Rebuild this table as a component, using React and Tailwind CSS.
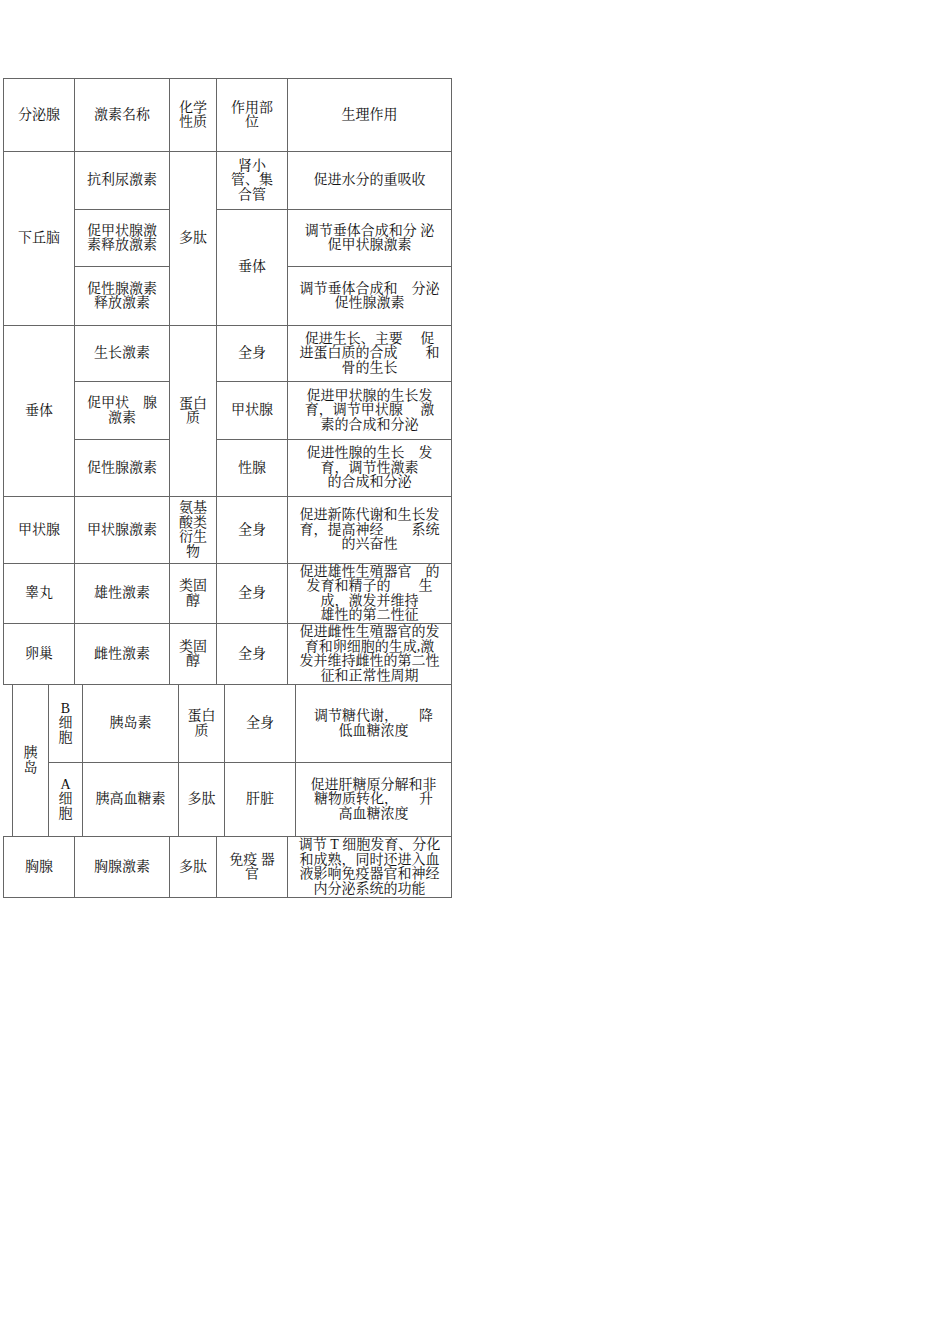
const FONT = {
  fontFamily: '"Liberation Serif", "Noto Serif CJK SC", "Noto Sans CJK SC", serif',
};

// 单元格：文字居中，多行用数组传入
function Cell({ lines, rowSpan, colSpan, className = '' }) {
  return (
    <td
      rowSpan={rowSpan}
      colSpan={colSpan}
      className={`border border-[#666] p-0 text-center align-middle whitespace-pre text-[14px] leading-[14.5px] text-[#111] ${className}`}
    >
      {lines.map((l, i) => (
        <div key={i}>{l}</div>
      ))}
    </td>
  );
}

const MAIN_COLS = [71, 95, 47, 71, 164];
const PANC_COLS = [36, 34, 96, 46, 71, 156];

function Cols({ widths }) {
  return (
    <colgroup>
      {widths.map((w, i) => (
        <col key={i} style={{ width: w }} />
      ))}
    </colgroup>
  );
}

export default function App() {
  return (
    <div className="w-[950px] h-[1344px] bg-white pt-[78px]" style={FONT}>
      {/* 主表 */}
      <table className="ml-[3px] w-[448px] table-fixed border-collapse">
        <Cols widths={MAIN_COLS} />
        <tbody>
          <tr className="h-[73px]">
            <Cell lines={['分泌腺']} />
            <Cell lines={['激素名称']} />
            <Cell lines={['化学', '性质']} />
            <Cell lines={['作用部', '位']} />
            <Cell lines={['生理作用']} />
          </tr>
          <tr className="h-[58px]">
            <Cell rowSpan={3} lines={['下丘脑']} />
            <Cell lines={['抗利尿激素']} />
            <Cell rowSpan={3} lines={['多肽']} />
            <Cell lines={['肾小', '管、集', '合管']} />
            <Cell lines={['促进水分的重吸收']} />
          </tr>
          <tr className="h-[57px]">
            <Cell lines={['促甲状腺激', '素释放激素']} />
            <Cell rowSpan={2} lines={['垂体']} />
            <Cell lines={['调节垂体合成和分 泌', '促甲状腺激素']} />
          </tr>
          <tr className="h-[59px]">
            <Cell lines={['促性腺激素', '释放激素']} />
            <Cell lines={['调节垂体合成和　分泌', '促性腺激素']} />
          </tr>
          <tr className="h-[56px]">
            <Cell rowSpan={3} lines={['垂体']} />
            <Cell lines={['生长激素']} />
            <Cell rowSpan={3} lines={['蛋白', '质']} />
            <Cell lines={['全身']} />
            <Cell lines={['促进生长、主要　 促', '进蛋白质的合成　　和', '骨的生长']} />
          </tr>
          <tr className="h-[58px]">
            <Cell lines={['促甲状　腺', '激素']} />
            <Cell lines={['甲状腺']} />
            <Cell lines={['促进甲状腺的生长发', '育，调节甲状腺　 激', '素的合成和分泌']} />
          </tr>
          <tr className="h-[57px]">
            <Cell lines={['促性腺激素']} />
            <Cell lines={['性腺']} />
            <Cell lines={['促进性腺的生长　发', '育，调节性激素', '的合成和分泌']} />
          </tr>
          <tr className="h-[67px]">
            <Cell lines={['甲状腺']} />
            <Cell lines={['甲状腺激素']} />
            <Cell lines={['氨基', '酸类', '衍生', '物']} />
            <Cell lines={['全身']} />
            <Cell lines={['促进新陈代谢和生长发', '育，提高神经　　系统', '的兴奋性']} />
          </tr>
          <tr className="h-[60px]">
            <Cell lines={['睾丸']} />
            <Cell lines={['雄性激素']} />
            <Cell lines={['类固', '醇']} />
            <Cell lines={['全身']} />
            <Cell lines={['促进雄性生殖器官　的', '发育和精子的　　生', '成，激发并维持', '雄性的第二性征']} />
          </tr>
          <tr className="h-[61px]">
            <Cell lines={['卵巢']} />
            <Cell lines={['雌性激素']} />
            <Cell lines={['类固', '醇']} />
            <Cell lines={['全身']} />
            <Cell lines={['促进雌性生殖器官的发', '育和卵细胞的生成,激', '发并维持雌性的第二性', '征和正常性周期']} />
          </tr>
        </tbody>
      </table>

      {/* 胰岛 */}
      <table className="ml-[12px] w-[439px] table-fixed border-collapse -mt-px">
        <Cols widths={PANC_COLS} />
        <tbody>
          <tr className="h-[78px]">
            <Cell rowSpan={2} lines={['胰', '岛']} className="border-[#222]" />
            <Cell lines={['B', '细', '胞']} className="border-[#222]" />
            <Cell lines={['胰岛素']} className="border-[#222]" />
            <Cell lines={['蛋白', '质']} className="border-[#222]" />
            <Cell lines={['全身']} className="border-[#222]" />
            <Cell lines={['调节糖代谢，　　降', '低血糖浓度']} className="border-[#222]" />
          </tr>
          <tr className="h-[74px]">
            <Cell lines={['A', '细', '胞']} className="border-[#222]" />
            <Cell lines={['胰高血糖素']} className="border-[#222]" />
            <Cell lines={['多肽']} className="border-[#222]" />
            <Cell lines={['肝脏']} className="border-[#222]" />
            <Cell lines={['促进肝糖原分解和非', '糖物质转化，　　升', '高血糖浓度']} className="border-[#222]" />
          </tr>
        </tbody>
      </table>

      {/* 胸腺 */}
      <table className="ml-[3px] w-[448px] table-fixed border-collapse -mt-px">
        <Cols widths={MAIN_COLS} />
        <tbody>
          <tr className="h-[61px]">
            <Cell lines={['胸腺']} />
            <Cell lines={['胸腺激素']} />
            <Cell lines={['多肽']} />
            <Cell lines={['免疫 器', '官']} />
            <Cell lines={['调节 T 细胞发育、分化', '和成熟，同时还进入血', '液影响免疫器官和神经', '内分泌系统的功能']} />
          </tr>
        </tbody>
      </table>
    </div>
  );
}
